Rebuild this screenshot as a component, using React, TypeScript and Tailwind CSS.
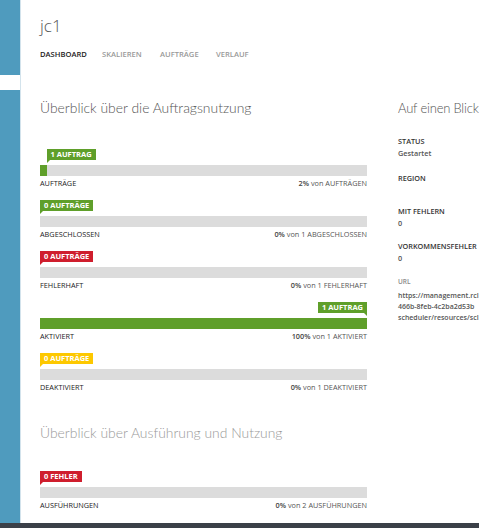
import React from "react";

const font = { fontFamily: '"Open Sans", "Noto Sans", Arial, sans-serif' };
const headFont = { fontFamily: 'Lato, "Open Sans", Arial, sans-serif' };

type Row = {
  tag: string;
  color: string;
  pct: number;
  label: string;
  pctText: string;
  rest: string;
};

function Tag({ text, color, right }: { text: string; color: string; right?: boolean }) {
  return (
    <div className="relative flex">
      <div
        className="h-[11px] px-[4px] flex items-center text-[7.5px] font-bold text-white leading-none whitespace-nowrap"
        style={{ backgroundColor: color }}
      >
        {text}
      </div>
      {right ? (
        <div
          className="absolute right-0 top-[11px] w-0 h-0 border-l-[3px] border-l-transparent border-t-[3px]"
          style={{ borderTopColor: color }}
        />
      ) : (
        <div
          className="absolute left-0 top-[11px] w-0 h-0 border-r-[3px] border-r-transparent border-t-[3px]"
          style={{ borderTopColor: color }}
        />
      )}
    </div>
  );
}

function Bar({ row }: { row: Row }) {
  const full = row.pct >= 100;
  return (
    <div className="flex flex-col">
      <div className="h-[11px] relative">
        {full ? (
          <div className="absolute right-0 top-0 flex">
            <Tag text={row.tag} color={row.color} right />
          </div>
        ) : (
          <div className="absolute top-0 flex" style={{ left: `${row.pct}%` }}>
            <Tag text={row.tag} color={row.color} />
          </div>
        )}
      </div>
      <div className="mt-[5px] h-[11px] bg-[#dcdcdc]">
        <div className="h-full" style={{ width: `${row.pct}%`, backgroundColor: row.color }} />
      </div>
      <div className="mt-[2px] flex justify-between text-[7.3px] leading-[11px] text-[#222]">
        <span>{row.label}</span>
        <span className="text-[#555]">
          <span className="font-semibold text-[#444]">{row.pctText}</span> von {row.rest}
        </span>
      </div>
    </div>
  );
}

const green = "#5f9f2a";
const red = "#cf1e2d";
const yellow = "#fdc800";

const rows: Row[] = [
  { tag: "1 AUFTRAG", color: green, pct: 2, label: "AUFTRÄGE", pctText: "2%", rest: "AUFTRÄGEN" },
  { tag: "0 AUFTRÄGE", color: green, pct: 0, label: "ABGESCHLOSSEN", pctText: "0%", rest: "1 ABGESCHLOSSEN" },
  { tag: "0 AUFTRÄGE", color: red, pct: 0, label: "FEHLERHAFT", pctText: "0%", rest: "1 FEHLERHAFT" },
  { tag: "1 AUFTRAG", color: green, pct: 100, label: "AKTIVIERT", pctText: "100%", rest: "1 AKTIVIERT" },
  { tag: "0 AUFTRÄGE", color: yellow, pct: 0, label: "DEAKTIVIERT", pctText: "0%", rest: "1 DEAKTIVIERT" },
];

export default function App() {
  return (
    <div className="w-[479px] h-[528px] overflow-hidden flex flex-col bg-white" style={font}>
      <div className="flex flex-1 min-h-0">
        <div className="w-[20px] flex flex-col shrink-0">
          <div className="h-[75px] bg-[#4f9bbe]" />
          <div className="h-[15px] bg-white" />
          <div className="flex-1 bg-[#4f9bbe]" />
        </div>
        <div className="w-[1px] bg-[#d3e3ec] shrink-0" />
        <div className="flex-1 min-w-0 pl-[19px] flex flex-col overflow-hidden">
          <div className="pt-[16px] text-[17px] leading-[20px] font-light text-[#555]">jc1</div>
          <div className="mt-[13px] flex text-[7.6px] leading-[10px] font-semibold">
            <span className="text-[#222] w-[62px]">DASHBOARD</span>
            <span className="text-[#999] w-[58px]">SKALIEREN</span>
            <span className="text-[#999] w-[56px]">AUFTRÄGE</span>
            <span className="text-[#999]">VERLAUF</span>
          </div>
          <div className="flex mt-[40px]">
            <div className="w-[327px] shrink-0 flex flex-col">
              <div className="text-[13.9px] leading-[18px] font-light text-[#555]" style={headFont}>
                Überblick über die Auftragsnutzung
              </div>
              <div className="mt-[32px] flex flex-col gap-[11px]">
                {rows.map((r, i) => (
                  <Bar key={i} row={r} />
                ))}
              </div>
              <div className="mt-[31px] text-[13.9px] leading-[18px] font-light text-[#999]" style={headFont}>
                Überblick über Ausführung und Nutzung
              </div>
              <div className="mt-[29px]">
                <Bar
                  row={{
                    tag: "0 FEHLER",
                    color: red,
                    pct: 0,
                    label: "AUSFÜHRUNGEN",
                    pctText: "0%",
                    rest: "2 AUSFÜHRUNGEN",
                  }}
                />
              </div>
            </div>
            <div className="ml-[31px] shrink-0 w-[200px] flex flex-col">
              <div
                className="text-[13px] leading-[18px] font-light text-[#555] whitespace-nowrap tracking-[-0.2px]"
                style={headFont}
              >
                Auf einen Blick
              </div>
              <div className="mt-[18px] flex flex-col text-[7.3px] leading-[12px] font-semibold">
                <span className="text-[#333]">STATUS</span>
                <span className="text-[#555]">Gestartet</span>
                <span className="text-[#333] mt-[13px]">REGION</span>
                <span className="text-[#333] mt-[21px]">MIT FEHLERN</span>
                <span className="text-[#555]">0</span>
                <span className="text-[#333] mt-[11px]">VORKOMMENSFEHLER</span>
                <span className="text-[#555]">0</span>
                <span className="text-[#888] text-[6.5px] mt-[12px]">URL</span>
                <div className="mt-[2px] text-[#555] leading-[11px] whitespace-nowrap text-[7px]">
                  <div>https://management.rcl</div>
                  <div>466b-8feb-4c2ba2d53b</div>
                  <div>scheduler/resources/scl</div>
                </div>
              </div>
            </div>
          </div>
        </div>
      </div>
      <div className="h-[5px] bg-[#3b4048] shrink-0" />
    </div>
  );
}
